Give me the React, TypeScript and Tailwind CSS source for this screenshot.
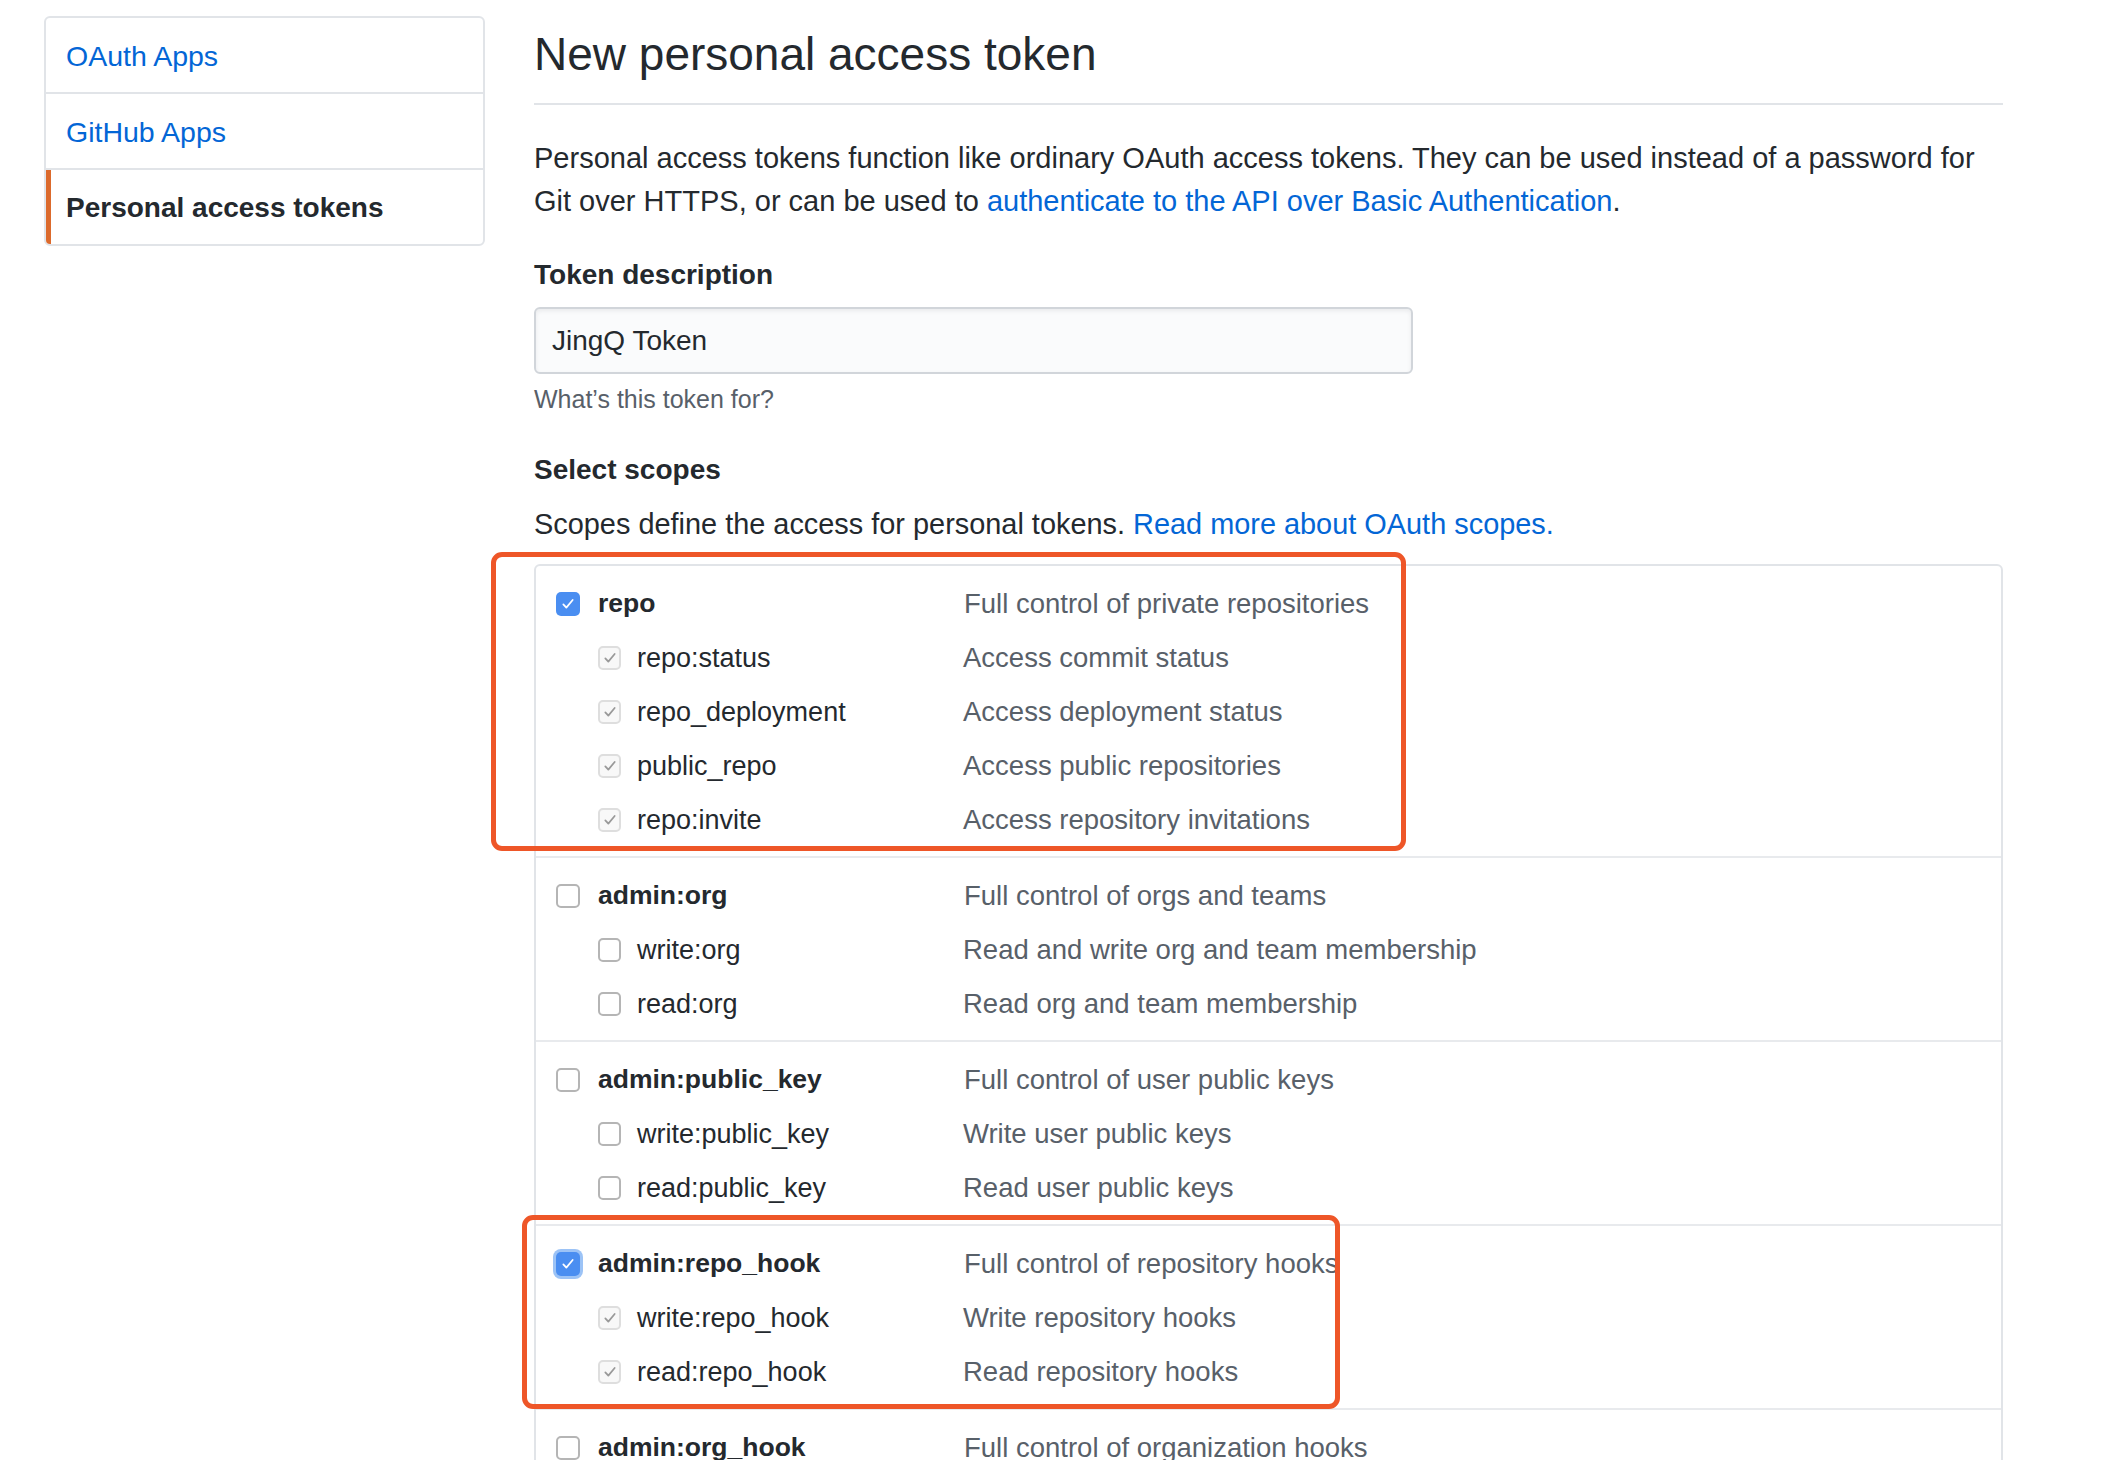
import React from "react";

type Scope = { name: string; desc: string; checked?: boolean; focus?: boolean };
type Group = { main: Scope; subs: Scope[]; mark?: string };

const groups: Group[] = [
  {
    main: { name: "repo", desc: "Full control of private repositories", checked: true },
    subs: [
      { name: "repo:status", desc: "Access commit status" },
      { name: "repo_deployment", desc: "Access deployment status" },
      { name: "public_repo", desc: "Access public repositories" },
      { name: "repo:invite", desc: "Access repository invitations" },
    ],
    mark: "first",
  },
  {
    main: { name: "admin:org", desc: "Full control of orgs and teams" },
    subs: [
      { name: "write:org", desc: "Read and write org and team membership" },
      { name: "read:org", desc: "Read org and team membership" },
    ],
  },
  {
    main: { name: "admin:public_key", desc: "Full control of user public keys" },
    subs: [
      { name: "write:public_key", desc: "Write user public keys" },
      { name: "read:public_key", desc: "Read user public keys" },
    ],
  },
  {
    main: { name: "admin:repo_hook", desc: "Full control of repository hooks", checked: true, focus: true },
    subs: [
      { name: "write:repo_hook", desc: "Write repository hooks" },
      { name: "read:repo_hook", desc: "Read repository hooks" },
    ],
    mark: "hook",
  },
  {
    main: { name: "admin:org_hook", desc: "Full control of organization hooks" },
    subs: [],
  },
];

const Check = ({ color }: { color: string }) => (
  <svg viewBox="0 0 24 24" className="w-[16px] h-[16px]" fill="none">
    <path d="M5 12.5l4.5 5L19 6" stroke={color} strokeWidth="2.6" strokeLinecap="round" strokeLinejoin="round" />
  </svg>
);

const MainBox = ({ checked, focus }: { checked?: boolean; focus?: boolean }) =>
  checked ? (
    <div
      className={
        "w-[24px] h-[24px] rounded-[5px] bg-[#4a8ef1] flex items-center justify-center shrink-0 " +
        (focus ? "ring-[3px] ring-[#9cc3f6]" : "")
      }
    >
      <Check color="#ffffff" />
    </div>
  ) : (
    <div className="w-[24px] h-[24px] rounded-[5px] bg-white border-2 border-[#b5b5b5] shrink-0" />
  );

const SubBox = ({ checked }: { checked: boolean }) =>
  checked ? (
    <div className="w-[23px] h-[24px] rounded-[5px] bg-[#f8f8f8] border-2 border-[#dedede] flex items-center justify-center shrink-0">
      <Check color="#999999" />
    </div>
  ) : (
    <div className="w-[23px] h-[24px] rounded-[5px] bg-white border-2 border-[#b5b5b5] shrink-0" />
  );

const ScopeGroup = ({ g, last }: { g: Group; last: boolean }) => (
  <div className={"relative pt-[11px] pb-[9px] " + (last ? "" : "border-b-2 border-[#e8eaed]")}>
    <div className="flex items-center h-[54px] pl-[20px]">
      <MainBox checked={g.main.checked} focus={g.main.focus} />
      <span className="ml-[18px] w-[366px] text-[26.5px] font-bold text-[#24292e]">{g.main.name}</span>
      <span className="text-[27.5px] text-[#586069]">{g.main.desc}</span>
    </div>
    {g.subs.map((s) => (
      <div key={s.name} className="flex items-center h-[54px] pl-[62px]">
        <SubBox checked={!!g.main.checked} />
        <span className="ml-[16px] w-[326px] text-[27px] text-[#24292e]">{s.name}</span>
        <span className="text-[27.5px] text-[#586069]">{s.desc}</span>
      </div>
    ))}
    {g.mark === "first" && (
      <div className="absolute left-[-45px] top-[-14px] w-[915px] h-[299px] border-[5px] border-[#ee5628] rounded-[11px] pointer-events-none" />
    )}
    {g.mark === "hook" && (
      <div className="absolute left-[-14px] top-[-11px] w-[818px] h-[194px] border-[5px] border-[#ee5628] rounded-[11px] pointer-events-none" />
    )}
  </div>
);

export default function App() {
  return (
    <div className="w-[2114px] h-[1460px] overflow-hidden bg-white font-['Liberation_Sans',Arial,sans-serif] text-[28px] text-[#24292e]">
      <div className="flex items-start gap-[49px] pl-[44px] pt-[16px]">
        {/* sidebar */}
        <nav className="w-[441px] shrink-0 border-2 border-[#e1e4e8] rounded-[6px] overflow-hidden">
          <div className="h-[76px] flex items-center pl-[20px] pt-[2px] border-b-2 border-[#e1e4e8] text-[#0366d6] text-[28.5px]">
            OAuth Apps
          </div>
          <div className="h-[76px] flex items-center pl-[20px] pt-[2px] border-b-2 border-[#e1e4e8] text-[#0366d6] text-[28.5px]">
            GitHub Apps
          </div>
          <div className="h-[74px] flex items-center pl-[15px] pt-[2px] border-l-[5px] border-[#dc6a2c] font-bold text-[#24292e]">
            Personal access tokens
          </div>
        </nav>

        {/* main */}
        <main className="w-[1469px] shrink-0">
          <div className="pt-[9px] pb-[20px] border-b-2 border-[#e1e4e8]">
            <h2 className="text-[46px] leading-[58px] font-normal text-[#24292e]">New personal access token</h2>
          </div>

          <p className="mt-[32px] text-[29px] leading-[43px]">
            Personal access tokens function like ordinary OAuth access tokens. They can be used instead of a password for
            <br />
            Git over HTTPS, or can be used to{" "}
            <a className="text-[#0366d6]">authenticate to the API over Basic Authentication</a>.
          </p>

          <div className="mt-[31px] font-bold leading-[42px]">Token description</div>
          <div className="mt-[11px] w-[879px] h-[67px] flex items-center pl-[16px] bg-[#fafbfc] border-2 border-[#d1d5da] rounded-[6px] shadow-[inset_0_2px_4px_rgba(27,31,35,0.075)]">
            JingQ Token
          </div>
          <div className="mt-[7px] text-[25px] leading-[36px] text-[#586069]">What’s this token for?</div>

          <div className="mt-[32px] font-bold leading-[42px]">Select scopes</div>
          <p className="mt-[12px] text-[28.9px] leading-[42px]">
            Scopes define the access for personal tokens.{" "}
            <a className="text-[#0366d6]">Read more about OAuth scopes.</a>
          </p>

          <div className="mt-[19px] border-2 border-[#e1e4e8] rounded-[6px]">
            {groups.map((g, i) => (
              <ScopeGroup key={g.main.name} g={g} last={i === groups.length - 1} />
            ))}
          </div>
        </main>
      </div>
    </div>
  );
}
